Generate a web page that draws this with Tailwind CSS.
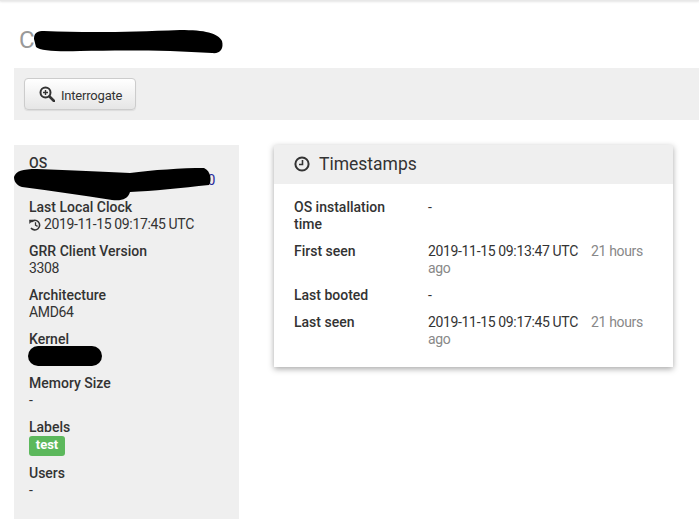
<!DOCTYPE html>
<html lang="en">
<head>
    <meta charset="UTF-8">
    <meta name="viewport" content="width=device-width, initial-scale=1.0">
    <title>Host information</title>
    <script src="https://cdn.jsdelivr.net/npm/@tailwindcss/browser@4"></script>
</head>
<body class="h-[524px] overflow-hidden bg-white font-['Roboto',sans-serif] text-[14px] leading-[17px] tracking-[-0.35px] text-[#333]">
    <div class="h-[1px] bg-[#e8e8e8] shadow-[0_1px_2px_rgba(0,0,0,0.15)]"></div>

    <!-- Hostname -->
    <div class="relative h-[67px] pl-[19px] pt-[25px]">
        <h1 class="text-[24px] leading-[29px] font-normal tracking-normal text-[#999]">C</h1>
        <svg class="absolute left-[30px] top-[26px]" width="200" height="30" viewBox="0 0 200 30">
            <path d="M4 12 C4 5 8 4 14 4 C60 6 100 5 150 3 C175 3 188 6 192 14 C194 22 190 27 182 26 C140 23 90 23 50 24 C30 25 10 24 6 20 Z" fill="#000"/>
        </svg>
    </div>

    <!-- Toolbar -->
    <div class="ml-[14px] h-[52px] bg-[#efefef] px-[10px] pt-[10px]">
        <button class="flex h-[32px] w-[112px] items-center gap-[6px] rounded-[4px] border border-[#ccc] bg-gradient-to-b from-white to-[#e6e6e6] pl-[14px] pt-[2px] text-[13px] tracking-[-0.2px] text-[#333] shadow-[0_1px_1px_rgba(0,0,0,0.08)]">
            <svg class="-mt-[2px]" width="16" height="16" viewBox="0 0 16 16" fill="none" stroke="#333">
                <circle cx="6.5" cy="6.5" r="5" stroke-width="2"/>
                <path d="M10.5 10.5 L15 15" stroke-width="2.6" stroke-linecap="round"/>
                <path d="M4 6.5 H9 M6.5 4 V9" stroke-width="1.4"/>
            </svg>
            Interrogate
        </button>
    </div>

    <div class="mt-[25px] flex items-start pl-[14px]">
        <!-- Sidebar -->
        <aside class="relative h-[374px] w-[225px] shrink-0 bg-[#efefef] px-[15px] pt-[10px]">
            <dl>
                <div class="mb-[10px]">
                    <dt class="font-medium tracking-normal">OS</dt>
                    <dd class="pr-[9px] text-right text-[#2a2a9a]">0</dd>
                </div>
                <div class="mb-[10px]">
                    <dt class="font-medium tracking-normal">Last Local Clock</dt>
                    <dd class="flex items-center gap-[3px]">
                        <svg width="12" height="12" viewBox="0 0 12 12" fill="none" stroke="#333" stroke-width="1.6">
                            <path d="M2.2 3 A4.8 4.8 0 1 1 2 9"/>
                            <path d="M0.2 0.8 L4.4 0.8 L0.4 5 Z" fill="#333" stroke="none"/>
                            <path d="M6.5 3.2 V6.2 L8.6 7.4" stroke-width="1.3"/>
                        </svg>
                        2019-11-15 09:17:45 UTC
                    </dd>
                </div>
                <div class="mb-[10px]">
                    <dt class="font-medium tracking-normal">GRR Client Version</dt>
                    <dd>3308</dd>
                </div>
                <div class="mb-[10px]">
                    <dt class="font-medium tracking-normal">Architecture</dt>
                    <dd>AMD64</dd>
                </div>
                <div class="mb-[10px]">
                    <dt class="font-medium tracking-normal">Kernel</dt>
                    <dd class="h-[17px]"></dd>
                </div>
                <div class="mb-[10px]">
                    <dt class="font-medium tracking-normal">Memory Size</dt>
                    <dd>-</dd>
                </div>
                <div class="mb-[9px]">
                    <dt class="font-medium tracking-normal">Labels</dt>
                    <dd class="h-[20px]">
                        <span class="inline-block h-[20px] w-[36px] rounded-[3px] bg-[#5cb85c] text-center text-[13px] leading-[17px] font-bold tracking-normal text-white">test</span>
                    </dd>
                </div>
                <div>
                    <dt class="font-medium tracking-normal">Users</dt>
                    <dd>-</dd>
                </div>
            </dl>

            <!-- Redaction marks -->
            <svg class="absolute -left-[2px] top-[22px]" width="206" height="36" viewBox="0 0 206 36">
                <path d="M2 10 C4 4 10 2 25 2 C60 3 90 5 118 6 C140 3 170 1 192 1 C199 4 200 14 197 18 C170 21 140 24 118 25 C116 32 110 34 100 33 C70 28 40 24 10 20 C4 18 2 14 2 10 Z" fill="#000"/>
            </svg>
            <div class="absolute left-[14px] top-[201px] h-[20px] w-[74px] rounded-full bg-black"></div>
        </aside>

        <!-- Timestamps card -->
        <section class="ml-[35px] w-[399px] shadow-[0_2px_6px_rgba(0,0,0,0.35)]">
            <h2 class="flex h-[39px] items-center gap-[9px] bg-[#efefef] px-[20px] pb-[1px] text-[17.5px] font-normal tracking-normal text-[#333]">
                <svg width="16" height="16" viewBox="0 0 16 16" fill="none" stroke="#333">
                    <circle cx="8" cy="8" r="6.6" stroke-width="2"/>
                    <path d="M8.5 4 V8.5 H5" stroke-width="1.6"/>
                </svg>
                Timestamps
            </h2>
            <div class="grid grid-cols-[134px_1fr] gap-y-[10px] px-[20px] pt-[15px] pb-[19px]">
                <div class="pr-[30px] font-medium tracking-normal">OS installation time</div>
                <div>-</div>
                <div class="font-medium tracking-normal">First seen</div>
                <div>2019-11-15 09:13:47 UTC <span class="ml-[10px] text-[#888]">21 hours ago</span></div>
                <div class="font-medium tracking-normal">Last booted</div>
                <div>-</div>
                <div class="font-medium tracking-normal">Last seen</div>
                <div>2019-11-15 09:17:45 UTC <span class="ml-[10px] text-[#888]">21 hours ago</span></div>
            </div>
        </section>
    </div>
</body>
</html>
